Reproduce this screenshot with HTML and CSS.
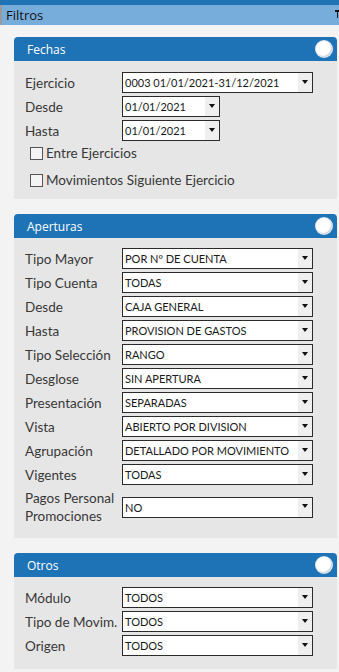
FILE: index.html
```html
<!DOCTYPE html>
<html lang="es">
<head>
<meta charset="utf-8">
<link rel="stylesheet" href="styles.css">
</head>
<body>
<div class="topbar"></div>
<div class="titlebar">
  <span class="title">Filtros</span>
  <svg class="corner" width="4" height="8" viewBox="0 0 4 8"><path d="M0 0H4V2H3V8H2V2H0Z" fill="#111"/></svg>
</div>
<div class="content">
  <section class="panel">
    <div class="panel-head"><span>Fechas</span><i class="knob"></i></div>
    <div class="panel-body">
      <div class="row"><label>Ejercicio</label><div class="sel"><span>0003 01/01/2021-31/12/2021</span><b></b></div></div>
      <div class="row"><label>Desde</label><div class="sel short"><span>01/01/2021</span><b></b></div></div>
      <div class="row"><label>Hasta</label><div class="sel short"><span>01/01/2021</span><b></b></div></div>
      <div class="checks">
        <div class="check"><i class="box"></i><span>Entre Ejercicios</span></div>
        <div class="check"><i class="box"></i><span>Movimientos Siguiente Ejercicio</span></div>
      </div>
    </div>
  </section>

  <section class="panel">
    <div class="panel-head"><span>Aperturas</span><i class="knob"></i></div>
    <div class="panel-body ap">
      <div class="row"><label>Tipo Mayor</label><div class="sel"><span>POR Nº DE CUENTA</span><b></b></div></div>
      <div class="row"><label>Tipo Cuenta</label><div class="sel"><span>TODAS</span><b></b></div></div>
      <div class="row"><label>Desde</label><div class="sel"><span>CAJA GENERAL</span><b></b></div></div>
      <div class="row"><label>Hasta</label><div class="sel"><span>PROVISION DE GASTOS</span><b></b></div></div>
      <div class="row"><label>Tipo Selección</label><div class="sel"><span>RANGO</span><b></b></div></div>
      <div class="row"><label>Desglose</label><div class="sel"><span>SIN APERTURA</span><b></b></div></div>
      <div class="row"><label>Presentación</label><div class="sel"><span>SEPARADAS</span><b></b></div></div>
      <div class="row"><label>Vista</label><div class="sel"><span>ABIERTO POR DIVISION</span><b></b></div></div>
      <div class="row"><label>Agrupación</label><div class="sel"><span>DETALLADO POR MOVIMIENTO</span><b></b></div></div>
      <div class="row"><label>Vigentes</label><div class="sel"><span>TODAS</span><b></b></div></div>
      <div class="row tall"><label>Pagos Personal<br>Promociones</label><div class="sel"><span>NO</span><b></b></div></div>
    </div>
  </section>

  <section class="panel">
    <div class="panel-head"><span>Otros</span><i class="knob"></i></div>
    <div class="panel-body ot">
      <div class="row"><label>Módulo</label><div class="sel"><span>TODOS</span><b></b></div></div>
      <div class="row"><label>Tipo de Movim.</label><div class="sel"><span>TODOS</span><b></b></div></div>
      <div class="row"><label>Origen</label><div class="sel"><span>TODOS</span><b></b></div></div>
    </div>
  </section>
</div>
</body>
</html>
```

FILE: styles.css
```css
* { box-sizing: border-box; }
html, body { margin: 0; padding: 0; }
body {
  width: 339px;
  height: 672px;
  overflow: hidden;
  background: #f3f3f3;
  font-family: Lato, "Liberation Sans", sans-serif;
}
.topbar { height: 5px; background: #1f72b4; }
.titlebar {
  height: 20px;
  background: #77addb;
  border-left: 2px solid #9a9a9a;
  display: flex;
  align-items: center;
  justify-content: space-between;
  padding-left: 4px;
}
.title { font-size: 13px; color: #111; font-family: "Open Sans", sans-serif; }
.corner { margin-right: 0; align-self: flex-start; margin-top: 5px; }
.content {
  padding: 12px 2px 0 14px;
  display: flex;
  flex-direction: column;
  gap: 15px;
}
.panel { width: 323px; }
.panel-head {
  height: 24px;
  background: #1e73b6;
  border-radius: 4px 4px 0 0;
  display: flex;
  align-items: center;
  justify-content: space-between;
  padding: 0 5px 0 13px;
  color: #fff;
  font-size: 12px;
  font-family: "Open Sans", sans-serif;
}
.knob {
  width: 16px;
  height: 16px;
  border-radius: 50%;
  background: #fff;
  box-shadow: inset -1px -1px 1px #c8d0da, 0 0 0 1px #dfe6ee;
}
.panel-body {
  background: #e6e6e6;
  padding: 11px 0 9px 11px;
  display: flex;
  flex-direction: column;
  gap: 3px;
}
.panel-body.ap { padding-top: 10px; padding-bottom: 12px; }
.panel-body.ot { padding-top: 10px; padding-bottom: 13px; }
.row {
  display: flex;
  align-items: center;
  height: 21px;
}
.row.tall { height: 38px; }
.row label {
  width: 97px;
  flex: none;
  font-size: 13.5px;
  line-height: 18px;
  color: #383838;
  white-space: nowrap;
}
.sel {
  width: 191px;
  height: 21px;
  border: 1px solid #2b2b2b;
  background: #fff;
  display: flex;
  align-items: center;
  justify-content: space-between;
}
.sel.short { width: 98px; }
.sel span {
  padding-left: 2px;
  font-size: 11px;
  color: #1a1a1a;
  white-space: nowrap;
}
.sel b {
  width: 14px;
  height: 19px;
  background: #efefef;
  display: flex;
  align-items: center;
  justify-content: center;
  padding-bottom: 2px;
}
.sel b::after {
  content: "";
  border-left: 3.5px solid transparent;
  border-right: 3.5px solid transparent;
  border-top: 4px solid #111;
}
.checks {
  display: flex;
  flex-direction: column;
  gap: 7px;
  margin-top: -1px;
  padding-left: 5px;
}
.check {
  height: 20px;
  display: flex;
  align-items: center;
  gap: 3px;
  font-size: 13.5px;
  color: #383838;
}
.box {
  width: 13px;
  height: 13px;
  border: 1px solid #555;
  background: #f4f4f4;
}
```
